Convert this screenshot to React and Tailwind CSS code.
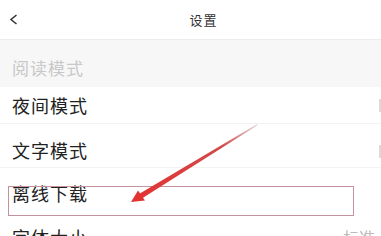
import React from "react";

const font = { fontFamily: '"Noto Sans CJK SC", "Noto Sans", sans-serif' };

export default function App() {
  return (
    <div className="relative w-[381px] h-[236px] overflow-hidden bg-white" style={font}>
      {/* header */}
      <div className="relative h-[40px] flex items-center justify-center border-b border-[#ececec]">
        <svg className="absolute left-[9px] top-[14px]" width="9" height="11" viewBox="0 0 9 11">
          <path d="M7.5 1 L2 5.5 L7.5 10" fill="none" stroke="#333" strokeWidth="1.5" />
        </svg>
        <span className="text-[13px] text-[#333] ml-[26px] tracking-[1px]">设置</span>
      </div>
      {/* section header */}
      <div className="h-[47px] bg-[#f7f7f7] flex items-end pl-[12px] pb-[7px]">
        <span className="text-[17px] leading-[24px] text-[#c8c8c8] tracking-[1px]">阅读模式</span>
      </div>
      {/* row 1 */}
      <div className="h-[37px] flex items-center pl-[12px] border-b border-[#f3f3f3]">
        <span className="text-[18px] leading-[24px] text-[#222] tracking-[1px]">夜间模式</span>
        <div className="ml-auto mr-[-41px] w-[43px] h-[13px] border-l-2 border-[#dadada]" />
      </div>
      {/* row 2 */}
      <div className="h-[44px] flex items-start pt-[14px] pl-[12px] border-b border-[#f3f3f3]">
        <span className="text-[18px] leading-[24px] text-[#222] tracking-[1px]">文字模式</span>
        <div className="ml-auto mr-[-41px] mt-[7px] w-[43px] h-[13px] border-l-2 border-[#dadada]" />
      </div>
      {/* row 3 */}
      <div className="h-[44px] flex items-start pt-[13px] pl-[12px]">
        <span className="text-[18px] leading-[24px] text-[#222] tracking-[1px]">离线下载</span>
      </div>
      {/* row 4 */}
      <div className="h-[44px] flex items-start pt-[13px] pl-[12px] pr-[6px]">
        <span className="text-[18px] leading-[24px] text-[#222] tracking-[1px]">字体大小</span>
        <span className="ml-auto text-[16px] leading-[24px] text-[#bbb]">标准</span>
      </div>

      {/* red highlight box */}
      <div className="absolute left-[8px] top-[186px] w-[346px] h-[30px] border border-[#c4929c]" />

      {/* arrow */}
      <svg className="absolute left-0 top-0 pointer-events-none" width="381" height="236" viewBox="0 0 381 236">
        <defs>
          <linearGradient id="g" x1="258" y1="125" x2="140" y2="197" gradientUnits="userSpaceOnUse">
            <stop offset="0" stopColor="#e6dede" />
            <stop offset="0.3" stopColor="#d24a4a" />
            <stop offset="1" stopColor="#e23333" />
          </linearGradient>
        </defs>
        <polygon points="258,125 257.2,124 139,194 141.8,198.6" fill="url(#g)" />
        <polygon points="131,202 138,190.5 145,200.5" fill="#e23333" />
      </svg>
    </div>
  );
}
